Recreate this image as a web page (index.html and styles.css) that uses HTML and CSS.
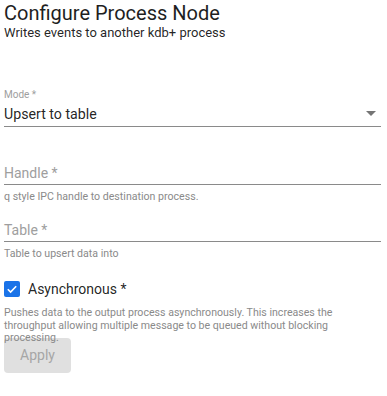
FILE: index.html
```html
<!DOCTYPE html>
<html lang="en">
<head>
    <meta charset="UTF-8">
    <meta name="viewport" content="width=device-width, initial-scale=1.0">
    <title>Configure Process Node</title>
    <link rel="stylesheet" href="styles.css">
</head>
<body>

<header class="head">
    <h1>Configure Process Node</h1>
    <p>Writes events to another kdb+ process</p>
</header>

<form class="form">
    <div class="field select">
        <label class="small-label">Mode *</label>
        <div class="control">
            <span class="value">Upsert to table</span>
            <svg class="arrow" width="10" height="5" viewBox="0 0 10 5"><path d="M0 0 L10 0 L5 5 Z" fill="#757575"/></svg>
        </div>
    </div>

    <div class="field text">
        <div class="control">
            <span class="placeholder">Handle *</span>
        </div>
        <div class="helper">q style IPC handle to destination process.</div>
    </div>

    <div class="field text">
        <div class="control">
            <span class="placeholder">Table *</span>
        </div>
        <div class="helper">Table to upsert data into</div>
    </div>

    <label class="check">
        <span class="box">
            <svg width="16" height="16" viewBox="0 0 16 16"><path d="M3.8 8.2 L6.6 11 L12.2 5.2" stroke="#fff" stroke-width="1.6" fill="none"/></svg>
        </span>
        <span class="check-text">Asynchronous *</span>
    </label>
    <div class="helper para">Pushes data to the output process asynchronously. This increases the throughput allowing multiple message to be queued without blocking processing.</div>

    <button type="button" class="btn" disabled>Apply</button>
</form>

</body>
</html>
```

FILE: styles.css
```css
body {
    font-family: Roboto, "Noto Sans", sans-serif;
    margin: 0;
    padding: 0 6px 0 4px;
    background-color: #ffffff;
    color: rgba(0, 0, 0, 0.87);
}
.head h1 {
    font-size: 20px;
    font-weight: 400;
    margin: 0;
    padding-top: 1px;
    line-height: 24px;
    color: #1f1f1f;
}
.head p {
    margin: 0;
    font-size: 13px;
    line-height: 16px;
}
.form {
    padding-top: 48px;
}
.small-label {
    display: block;
    font-size: 10px;
    line-height: 12px;
    color: #9e9e9e;
}
.control {
    display: flex;
    align-items: center;
    justify-content: space-between;
    border-bottom: 1px solid #8a8a8a;
    height: 26px;
    box-sizing: border-box;
}
.text {
    margin-top: 32px;
}
.text + .text {
    margin-top: 13px;
}
.text .control {
    align-items: flex-end;
    padding-bottom: 3px;
}
.value {
    font-size: 14.2px;
}
.arrow {
    margin-right: 5px;
}
.placeholder {
    font-size: 14px;
    color: #9e9e9e;
}
.helper {
    font-size: 10.6px;
    line-height: 12px;
    color: #8a8a8a;
    margin-top: 6px;
}
.check {
    display: flex;
    align-items: center;
    gap: 8px;
    margin-top: 21px;
}
.box {
    width: 16px;
    height: 16px;
    background-color: #1a73e8;
    border-radius: 2px;
    display: flex;
}
.check-text {
    font-size: 14px;
}
.para {
    margin-top: 10px;
    font-size: 10.6px;
    line-height: 12.5px;
    max-width: 335px;
}
.btn {
    display: block;
    margin-top: -7px;
    width: 67px;
    height: 35px;
    background-color: #e0e0e0;
    color: #a6a6a6;
    font-family: Roboto, sans-serif;
    font-size: 14px;
    border: none;
    border-radius: 4px;
}
```
